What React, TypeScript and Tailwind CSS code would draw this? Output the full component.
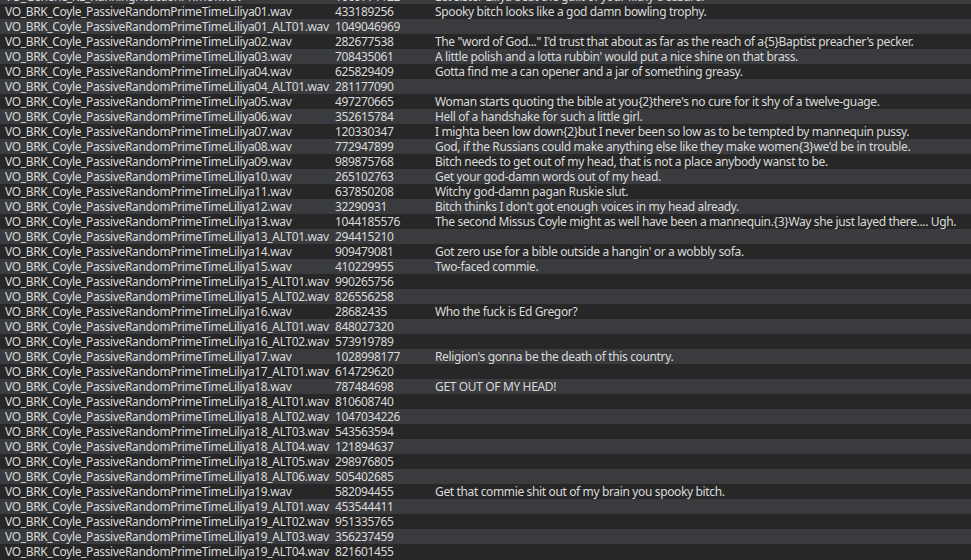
import React from "react";

type Row = [string, string, string];

const rows: Row[] = [
  ["VO_Generic_RE_RunningReactionPrimeT.wav", "1069771122", "Let sister Liliya beat the guilt of your filthy treasure."],
  ["VO_BRK_Coyle_PassiveRandomPrimeTimeLiliya01.wav", "433189256", "Spooky bitch looks like a god damn bowling trophy."],
  ["VO_BRK_Coyle_PassiveRandomPrimeTimeLiliya01_ALT01.wav", "1049046969", ""],
  ["VO_BRK_Coyle_PassiveRandomPrimeTimeLiliya02.wav", "282677538", "The \"word of God...\" I'd trust that about as far as the reach of a{5}Baptist preacher's pecker."],
  ["VO_BRK_Coyle_PassiveRandomPrimeTimeLiliya03.wav", "708435061", "A little polish and a lotta rubbin' would put a nice shine on that brass."],
  ["VO_BRK_Coyle_PassiveRandomPrimeTimeLiliya04.wav", "625829409", "Gotta find me a can opener and a jar of something greasy."],
  ["VO_BRK_Coyle_PassiveRandomPrimeTimeLiliya04_ALT01.wav", "281177090", ""],
  ["VO_BRK_Coyle_PassiveRandomPrimeTimeLiliya05.wav", "497270665", "Woman starts quoting the bible at you{2}there's no cure for it shy of a twelve-guage."],
  ["VO_BRK_Coyle_PassiveRandomPrimeTimeLiliya06.wav", "352615784", "Hell of a handshake for such a little girl."],
  ["VO_BRK_Coyle_PassiveRandomPrimeTimeLiliya07.wav", "120330347", "I mighta been low down{2}but I never been so low as to be tempted by mannequin pussy."],
  ["VO_BRK_Coyle_PassiveRandomPrimeTimeLiliya08.wav", "772947899", "God, if the Russians could make anything else like they make women{3}we'd be in trouble."],
  ["VO_BRK_Coyle_PassiveRandomPrimeTimeLiliya09.wav", "989875768", "Bitch needs to get out of my head, that is not a place anybody wanst to be."],
  ["VO_BRK_Coyle_PassiveRandomPrimeTimeLiliya10.wav", "265102763", "Get your god-damn words out of my head."],
  ["VO_BRK_Coyle_PassiveRandomPrimeTimeLiliya11.wav", "637850208", "Witchy god-damn pagan Ruskie slut."],
  ["VO_BRK_Coyle_PassiveRandomPrimeTimeLiliya12.wav", "32290931", "Bitch thinks I don't got enough voices in my head already."],
  ["VO_BRK_Coyle_PassiveRandomPrimeTimeLiliya13.wav", "1044185576", "The second Missus Coyle might as well have been a mannequin.{3}Way she just layed there.... Ugh."],
  ["VO_BRK_Coyle_PassiveRandomPrimeTimeLiliya13_ALT01.wav", "294415210", ""],
  ["VO_BRK_Coyle_PassiveRandomPrimeTimeLiliya14.wav", "909479081", "Got zero use for a bible outside a hangin' or a wobbly sofa."],
  ["VO_BRK_Coyle_PassiveRandomPrimeTimeLiliya15.wav", "410229955", "Two-faced commie."],
  ["VO_BRK_Coyle_PassiveRandomPrimeTimeLiliya15_ALT01.wav", "990265756", ""],
  ["VO_BRK_Coyle_PassiveRandomPrimeTimeLiliya15_ALT02.wav", "826556258", ""],
  ["VO_BRK_Coyle_PassiveRandomPrimeTimeLiliya16.wav", "28682435", "Who the fuck is Ed Gregor?"],
  ["VO_BRK_Coyle_PassiveRandomPrimeTimeLiliya16_ALT01.wav", "848027320", ""],
  ["VO_BRK_Coyle_PassiveRandomPrimeTimeLiliya16_ALT02.wav", "573919789", ""],
  ["VO_BRK_Coyle_PassiveRandomPrimeTimeLiliya17.wav", "1028998177", "Religion's gonna be the death of this country."],
  ["VO_BRK_Coyle_PassiveRandomPrimeTimeLiliya17_ALT01.wav", "614729620", ""],
  ["VO_BRK_Coyle_PassiveRandomPrimeTimeLiliya18.wav", "787484698", "GET OUT OF MY HEAD!"],
  ["VO_BRK_Coyle_PassiveRandomPrimeTimeLiliya18_ALT01.wav", "810608740", ""],
  ["VO_BRK_Coyle_PassiveRandomPrimeTimeLiliya18_ALT02.wav", "1047034226", ""],
  ["VO_BRK_Coyle_PassiveRandomPrimeTimeLiliya18_ALT03.wav", "543563594", ""],
  ["VO_BRK_Coyle_PassiveRandomPrimeTimeLiliya18_ALT04.wav", "121894637", ""],
  ["VO_BRK_Coyle_PassiveRandomPrimeTimeLiliya18_ALT05.wav", "298976805", ""],
  ["VO_BRK_Coyle_PassiveRandomPrimeTimeLiliya18_ALT06.wav", "505402685", ""],
  ["VO_BRK_Coyle_PassiveRandomPrimeTimeLiliya19.wav", "582094455", "Get that commie shit out of my brain you spooky bitch."],
  ["VO_BRK_Coyle_PassiveRandomPrimeTimeLiliya19_ALT01.wav", "453544411", ""],
  ["VO_BRK_Coyle_PassiveRandomPrimeTimeLiliya19_ALT02.wav", "951335765", ""],
  ["VO_BRK_Coyle_PassiveRandomPrimeTimeLiliya19_ALT03.wav", "356237459", ""],
  ["VO_BRK_Coyle_PassiveRandomPrimeTimeLiliya19_ALT04.wav", "821601455", ""],
];

export default function App() {
  return (
    <div className="w-[971px] h-[560px] overflow-hidden bg-[#272727] font-['Noto_Sans',sans-serif] text-[12px] tracking-[-0.36px] text-[#dadada]">
      <div className="-mt-[11px]">
        {rows.map(([file, id, line], i) => (
          <div
            key={i}
            className={
              "flex h-[15px] items-center leading-[15px] whitespace-nowrap " +
              (i % 2 === 0 ? "bg-[#393b3e]" : "bg-[#272727]")
            }
          >
            <span className="w-[335px] shrink-0 pl-[5px]">{file}</span>
            <span className="w-[100px] shrink-0">{id}</span>
            <span>{line}</span>
          </div>
        ))}
      </div>
    </div>
  );
}
